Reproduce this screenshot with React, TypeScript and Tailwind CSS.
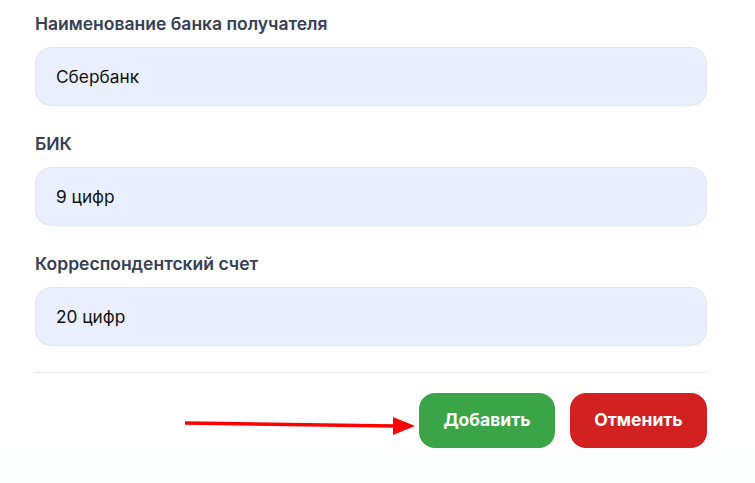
import React from 'react';

const fields = [
  { label: 'Наименование банка получателя', value: 'Сбербанк' },
  { label: 'БИК', value: '9 цифр' },
  { label: 'Корреспондентский счет', value: '20 цифр' },
];

// red annotation arrow pointing at the submit button
function Arrow() {
  return (
    <svg width="232" height="20" viewBox="0 0 232 20" className="absolute left-[185px] top-[415px]">
      <line x1="0" y1="8" x2="210" y2="11" stroke="#ff0000" strokeWidth="3.5" />
      <polygon points="208,2 230,11 208,20" fill="#ff0000" />
    </svg>
  );
}

export default function App() {
  return (
    <div className="relative w-[755px] h-[483px] bg-white font-['Inter',sans-serif] overflow-hidden">
      <div className="px-[35px] w-[742px] pt-[12px]">
        {fields.map((f) => (
          <div key={f.label} className="mb-[26px] last:mb-[25px]">
            <div className="text-[17.5px] leading-[24px] font-semibold text-[#344054] mb-[11px]">{f.label}</div>
            <div className="h-[59px] rounded-[16px] bg-[#e9efff] border border-[#dfe5f3] flex items-center px-[20px] text-[17.3px] text-[#111111]">
              {f.value}
            </div>
          </div>
        ))}
        <div className="border-t border-[#e7e8ef]" />
        <div className="flex justify-end pt-[20px]">
          <button className="w-[136px] h-[55px] rounded-[16px] bg-[#3ba446] text-white font-bold text-[17.5px]">Добавить</button>
          <button className="w-[137px] h-[55px] rounded-[16px] bg-[#d32020] text-white font-bold text-[17.5px] ml-[15px]">Отменить</button>
        </div>
      </div>
      <div className="bg-[#fcfdfd] h-[40px]" />
      <Arrow />
    </div>
  );
}
